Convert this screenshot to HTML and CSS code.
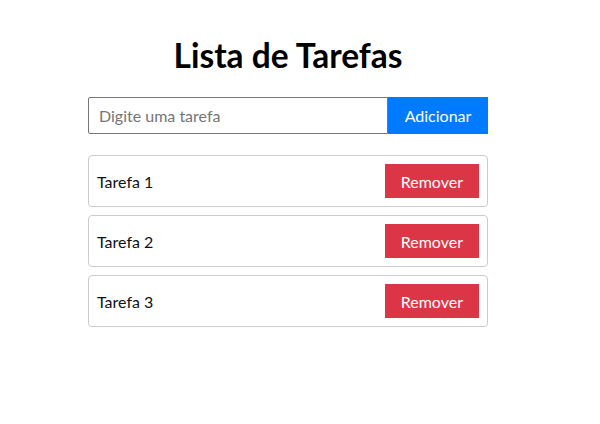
FILE: index.html
```html
<!DOCTYPE html>
<html lang="pt">
<head>
<meta charset="utf-8">
<title>Lista de Tarefas</title>
<link rel="stylesheet" href="styles.css">
</head>
<body>
<main class="app">
  <h1 class="title">Lista de Tarefas</h1>
  <form class="add-form">
    <input class="add-input" type="text" placeholder="Digite uma tarefa">
    <button class="add-btn" type="button">Adicionar</button>
  </form>
  <ul class="tasks">
    <li class="task"><span class="task-name">Tarefa 1</span><button class="remove-btn" type="button">Remover</button></li>
    <li class="task"><span class="task-name">Tarefa 2</span><button class="remove-btn" type="button">Remover</button></li>
    <li class="task"><span class="task-name">Tarefa 3</span><button class="remove-btn" type="button">Remover</button></li>
  </ul>
</main>
</body>
</html>
```
FILE: styles.css
```css
html, body {
  margin: 0;
  background: #ffffff;
}
body {
  font-family: "Lato", "Liberation Sans", sans-serif;
  font-size: 16px;
  color: #000000;
}
.app {
  width: 400px;
  margin: 0 0 0 88px;
  padding-top: 35px;
}
.title {
  margin: 0;
  font-size: 33.5px;
  font-weight: 700;
  line-height: 40px;
  text-align: center;
}
.add-form {
  display: flex;
  margin-top: 22px;
}
.add-input {
  width: 300px;
  box-sizing: border-box;
  height: 37px;
  margin: 0;
  padding: 0 10px;
  border: 1px solid #767676;
  border-radius: 2px 0 0 2px;
  font-family: inherit;
  font-size: 16px;
  color: #000;
  outline: none;
}
.add-input::placeholder {
  color: #757575;
}
.add-btn {
  width: 100px;
  height: 37px;
  margin: 0;
  border: none;
  border-radius: 0;
  background: #007bff;
  color: #ffffff;
  font-family: inherit;
  font-size: 16px;
  cursor: pointer;
}
.tasks {
  list-style: none;
  margin: 21px 0 0;
  padding: 0;
  display: flex;
  flex-direction: column;
  gap: 8px;
}
.task {
  display: flex;
  align-items: center;
  justify-content: space-between;
  padding: 8px;
  border: 1px solid #cccccc;
  border-radius: 4px;
}
.task-name {
  color: #111111;
}
.remove-btn {
  height: 34px;
  padding: 0 16px;
  border: none;
  border-radius: 0;
  background: #dc3545;
  color: #ffffff;
  font-family: inherit;
  font-size: 16px;
  cursor: pointer;
}
```
